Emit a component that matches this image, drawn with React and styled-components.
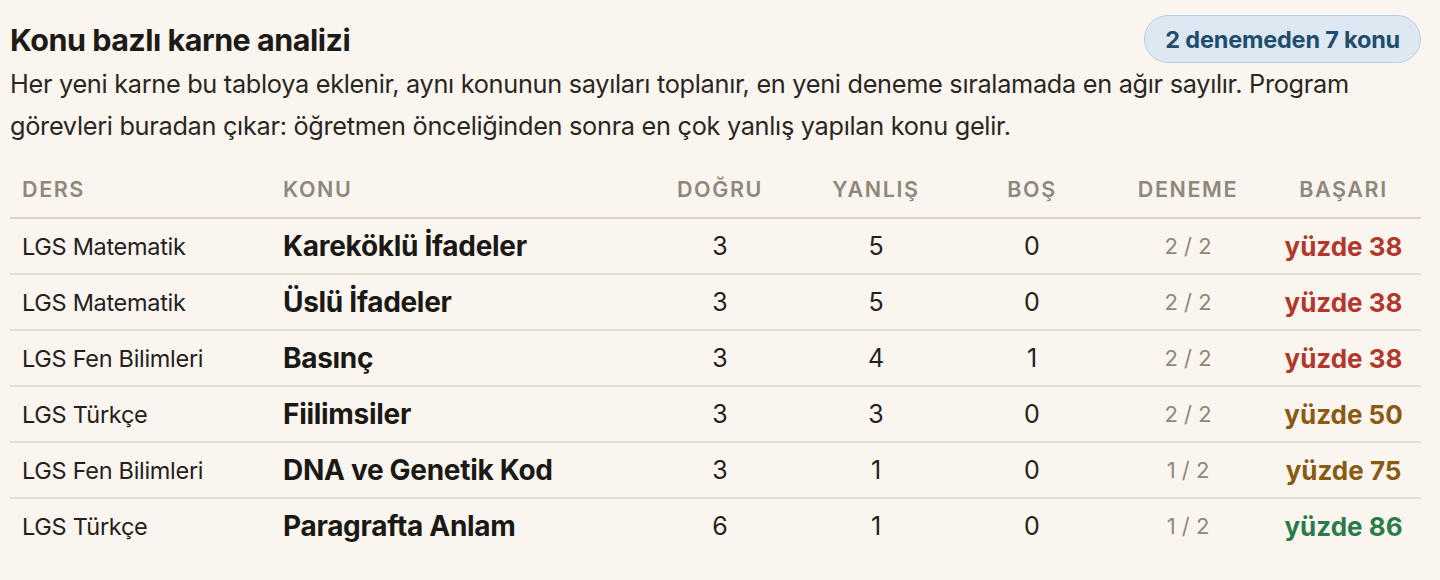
import styled, { createGlobalStyle } from "styled-components";

const GlobalStyle = createGlobalStyle`
  body {
    margin: 0;
    background: #faf6ef;
    font-family: Inter, "Noto Sans", sans-serif;
    color: #24211d;
  }
`;

const Page = styled.div`
  padding: 15px 19px 0 10px;
`;

const Header = styled.div`
  display: flex;
  align-items: center;
  justify-content: space-between;
  height: 48px;
`;

const Title = styled.h2`
  margin: 0;
  font-size: 30.5px;
  font-weight: 700;
  letter-spacing: -0.5px;
  color: #1d1b18;
`;

const Badge = styled.span`
  display: inline-flex;
  align-items: center;
  height: 46px;
  padding: 0 20px;
  border: 1px solid #b7d0e4;
  border-radius: 24px;
  background: #dde8f2;
  color: #1f4d6d;
  font-size: 23.5px;
  font-weight: 700;
  letter-spacing: -0.2px;
`;

const Lead = styled.p`
  margin: 0;
  font-size: 25.3px;
  line-height: 42px;
  color: #2a2622;
  letter-spacing: -0.3px;
  white-space: nowrap;
`;

const Table = styled.table`
  margin-top: 14px;
  width: 1411px;
  border-collapse: collapse;
  table-layout: fixed;
`;

const Th = styled.th`
  height: 56px;
  padding: 0 12px;
  text-align: ${(p) => p.$align || "center"};
  font-size: 21.5px;
  font-weight: 600;
  letter-spacing: 1.6px;
  color: #8e887b;
  border-bottom: 2px solid #ddd3c1;
`;

const Tr = styled.tr`
  & + & td {
    border-top: 2px solid #e6dece;
  }
`;

const Td = styled.td`
  height: 54px;
  padding: 0 12px;
  text-align: center;
  font-size: 25px;
  color: #24211d;
`;

const Subject = styled(Td)`
  text-align: left;
  font-size: 23.5px;
  letter-spacing: -0.3px;
`;

const Topic = styled(Td)`
  text-align: left;
  font-size: 28px;
  font-weight: 700;
  letter-spacing: -0.3px;
  color: #1b1916;
`;

const Exams = styled(Td)`
  font-size: 22px;
  color: #8e887b;
`;

const Score = styled(Td)`
  font-size: 26px;
  font-weight: 700;
  color: ${(p) => p.$color};
`;

const scoreColor = (v) => (v < 45 ? "#b2372c" : v < 80 ? "#8a5a12" : "#2a7b4c");

const rows = [
  ["LGS Matematik", "Kareköklü İfadeler", 3, 5, 0, "2 / 2", 38],
  ["LGS Matematik", "Üslü İfadeler", 3, 5, 0, "2 / 2", 38],
  ["LGS Fen Bilimleri", "Basınç", 3, 4, 1, "2 / 2", 38],
  ["LGS Türkçe", "Fiilimsiler", 3, 3, 0, "2 / 2", 50],
  ["LGS Fen Bilimleri", "DNA ve Genetik Kod", 3, 1, 0, "1 / 2", 75],
  ["LGS Türkçe", "Paragrafta Anlam", 6, 1, 0, "1 / 2", 86],
];

export default function App() {
  return (
    <>
      <GlobalStyle />
      <Page>
        <Header>
          <Title>Konu bazlı karne analizi</Title>
          <Badge>2 denemeden 7 konu</Badge>
        </Header>
        <Lead>
          Her yeni karne bu tabloya eklenir, aynı konunun sayıları toplanır, en yeni deneme sıralamada en ağır sayılır. Program
          <br />
          görevleri buradan çıkar: öğretmen önceliğinden sonra en çok yanlış yapılan konu gelir.
        </Lead>
        <Table>
          <colgroup>
            <col style={{ width: 261 }} />
            <col style={{ width: 371 }} />
            <col style={{ width: 156 }} />
            <col style={{ width: 156 }} />
            <col style={{ width: 156 }} />
            <col style={{ width: 156 }} />
            <col style={{ width: 155 }} />
          </colgroup>
          <thead>
            <tr>
              <Th $align="left">DERS</Th>
              <Th $align="left">KONU</Th>
              <Th>DOĞRU</Th>
              <Th>YANLIŞ</Th>
              <Th>BOŞ</Th>
              <Th>DENEME</Th>
              <Th>BAŞARI</Th>
            </tr>
          </thead>
          <tbody>
            {rows.map(([ders, konu, d, y, b, den, s]) => (
              <Tr key={konu}>
                <Subject>{ders}</Subject>
                <Topic>{konu}</Topic>
                <Td>{d}</Td>
                <Td>{y}</Td>
                <Td>{b}</Td>
                <Exams>{den}</Exams>
                <Score $color={scoreColor(s)}>yüzde {s}</Score>
              </Tr>
            ))}
          </tbody>
        </Table>
      </Page>
    </>
  );
}
